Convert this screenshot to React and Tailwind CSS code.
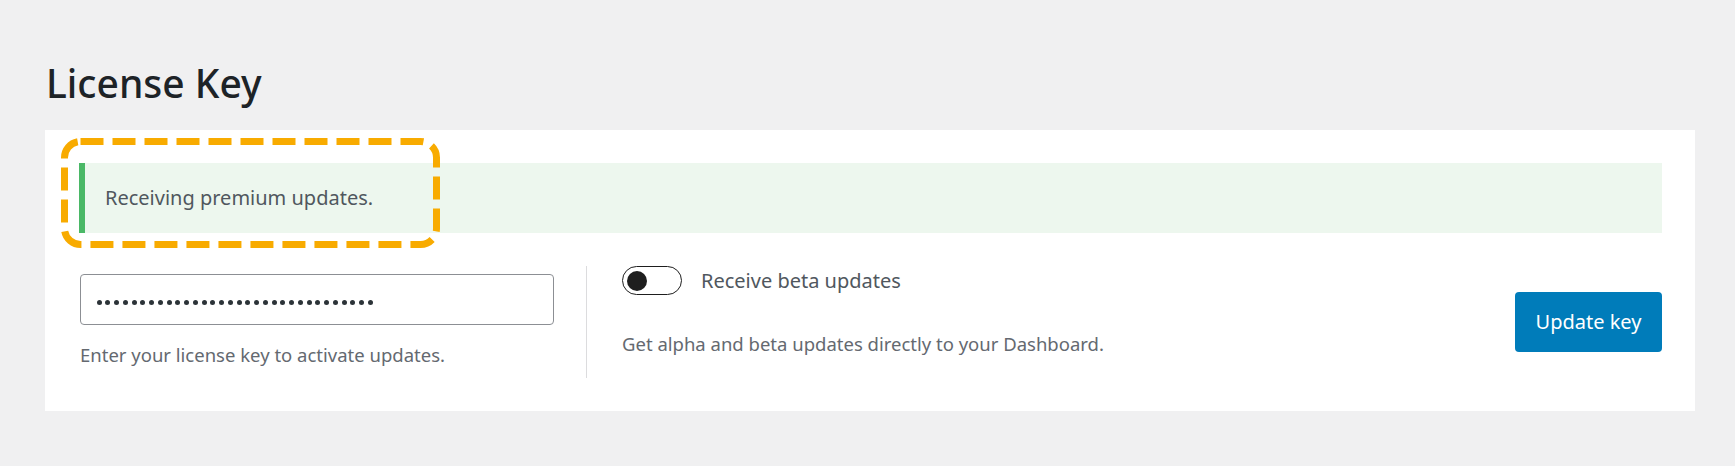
import React from "react";

function Dots({ count }) {
  return (
    <div className="flex items-center gap-[3.75px]">
      {Array.from({ length: count }).map((_, i) => (
        <span key={i} className="block h-[5px] w-[5px] rounded-full bg-[#2c3338]" />
      ))}
    </div>
  );
}

export default function App() {
  return (
    <div className="h-[466px] w-[1735px] overflow-hidden bg-[#f0f0f1] font-['Noto_Sans',sans-serif]">
      <div className="pl-[46px] pt-[63px]">
        <h1 className="text-[39px] font-medium leading-none text-[#1d2327]">License Key</h1>
      </div>

      <div className="relative ml-[45px] mt-[28px] w-[1650px] bg-white pb-[33px] pl-[34px] pr-[33px] pt-[33px]">
        <div className="flex h-[70px] items-center border-l-[6px] border-[#4ab866] bg-[#edf7ee] pl-[20px]">
          <p className="text-[20px] leading-[28px] text-[#50575e]">Receiving premium updates.</p>
        </div>

        <div className="mt-[33px] flex h-[112px]">
          <div className="ml-[1px] w-[474px] pt-[8px]">
            <div className="flex h-[51px] items-center rounded-[4px] border border-[#8c8f94] bg-white pl-[15.5px] pt-[6px]">
              <Dots count={32} />
            </div>
            <p className="mt-[16px] text-[18.5px] leading-[28px] text-[#646970]">
              Enter your license key to activate updates.
            </p>
          </div>

          <div className="ml-[32px] w-px bg-[#dcdcde]" />

          <div className="ml-[35px] flex-1">
            <div className="flex h-[29px] items-center">
              <div className="flex h-[29px] w-[60px] items-center rounded-full border-[1.5px] border-[#1e1e1e] pl-[3.5px]">
                <span className="block h-[20px] w-[20px] rounded-full bg-[#1e1e1e]" />
              </div>
              <span className="ml-[19px] text-[20px] leading-[28px] text-[#50575e]">Receive beta updates</span>
            </div>
            <p className="mt-[35px] text-[18.5px] leading-[28px] text-[#646970]">
              Get alpha and beta updates directly to your Dashboard.
            </p>
          </div>

          <div className="flex items-center">
            <button className="flex h-[60px] w-[147px] items-center justify-center rounded-[4px] bg-[#007cba] text-[20px] leading-none text-white">
              Update key
            </button>
          </div>
        </div>

        <svg
          className="pointer-events-none absolute left-[16px] top-[8px]"
          width="379"
          height="110"
          viewBox="0 0 379 110"
          fill="none"
        >
          <rect
            x="3.5"
            y="3.5"
            width="372"
            height="103"
            rx="16"
            stroke="#f8ab00"
            strokeWidth="7"
            strokeDasharray="23 9"
          />
        </svg>
      </div>
    </div>
  );
}
